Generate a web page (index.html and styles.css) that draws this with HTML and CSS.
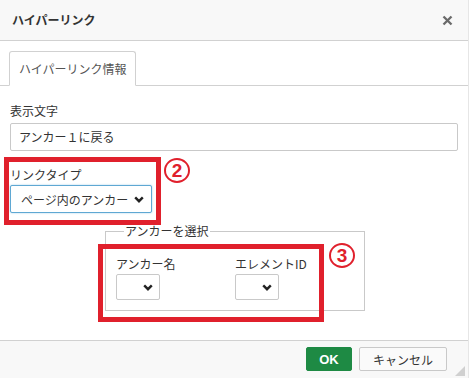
FILE: index.html
```html
<!doctype html>
<html>

<head>
	<link rel="stylesheet" href="styles.css">
</head>

<body>
	<div class="dialog">
		<div class="head">
			<span class="title">ハイパーリンク</span>
			<svg class="close" width="11" height="11" viewBox="0 0 11 11"><path d="M1.5 1.5 L9.5 9.5 M9.5 1.5 L1.5 9.5" stroke="#6a6a6a" stroke-width="2.3"/></svg>
		</div>
		<div class="main">
			<div class="tabs">
				<div class="tab">ハイパーリンク情報</div>
			</div>
			<div class="label first">表示文字</div>
			<div class="input">アンカー１に戻る</div>
			<div class="label second">リンクタイプ</div>
			<div class="select focus">
				<span>ページ内のアンカー</span>
				<svg width="10" height="7" viewBox="0 0 10 7"><path d="M1.2 1.4 L5 5.2 L8.8 1.4" fill="none" stroke="#222" stroke-width="2.4"/></svg>
			</div>
			<fieldset class="anchors">
				<legend>アンカーを選択</legend>
				<div class="cols">
					<div class="col">
						<div class="label">アンカー名</div>
						<div class="select small">
							<svg width="10" height="7" viewBox="0 0 10 7"><path d="M1.2 1.4 L5 5.2 L8.8 1.4" fill="none" stroke="#222" stroke-width="2.4"/></svg>
						</div>
					</div>
					<div class="col">
						<div class="label">エレメントID</div>
						<div class="select small">
							<svg width="10" height="7" viewBox="0 0 10 7"><path d="M1.2 1.4 L5 5.2 L8.8 1.4" fill="none" stroke="#222" stroke-width="2.4"/></svg>
						</div>
					</div>
				</div>
			</fieldset>
		</div>
		<div class="foot">
			<button type="button" class="ok">OK</button>
			<button type="button" class="cancel">キャンセル</button>
		</div>
		<span class="grip"></span>

		<!-- annotations -->
		<div class="mark mark-type"></div>
		<div class="num num-2">2</div>
		<div class="mark mark-anchor"></div>
		<div class="num num-3">3</div>
	</div>
</body>

</html>
```

FILE: styles.css
```css
body {
	margin: 0;
	background: #fff;
	font-family: "Noto Sans CJK JP", "Noto Sans", sans-serif;
	font-size: 12px;
	color: #333;
}

.dialog {
	position: relative;
	width: 469px;
	height: 378px;
	display: flex;
	flex-direction: column;
	box-sizing: border-box;
	border-right: 1px solid #e6e6e6;
	overflow: hidden;
}

.head {
	height: 40px;
	flex: none;
	display: flex;
	justify-content: space-between;
	align-items: center;
	padding: 0 15px 0 12px;
	background: #f8f8f8;
	border-bottom: 1px solid #d1d1d1;
}

.title {
	font-weight: bold;
	color: #333;
	line-height: 16px;
}

.main {
	flex: 1;
	padding: 0 10px;
}

.tabs {
	margin: 10px -10px 0;
	padding-left: 9px;
	border-bottom: 1px solid #d1d1d1;
	display: flex;
}

.tab {
	height: 33px;
	line-height: 33px;
	padding: 0 8px 0 9px;
	margin-bottom: -1px;
	background: #fff;
	border: 1px solid #d1d1d1;
	border-bottom: 1px solid #fff;
	border-radius: 3px 3px 0 0;
	color: #555;
}

.label {
	line-height: 16px;
	color: #333;
	white-space: nowrap;
}

.label.first {
	margin-top: 17px;
}

.label.second {
	margin-top: 16px;
}

.input {
	margin-top: 4px;
	height: 28px;
	line-height: 26px;
	box-sizing: border-box;
	border: 1px solid #c9c9c9;
	border-radius: 2px;
	padding: 0 8px;
}

.select {
	margin-top: 2px;
	height: 28px;
	box-sizing: border-box;
	border: 1px solid #c9c9c9;
	border-radius: 2px;
	display: flex;
	align-items: center;
	justify-content: flex-end;
	padding: 0 7px;
	background: #fff;
	white-space: nowrap;
}

.select.focus {
	width: 142px;
	justify-content: space-between;
	padding: 0 7px 0 10px;
	border: 1px solid #5fa8d3;
	box-shadow: 0 0 2px #9ccbe6;
}

.select.small {
	width: 44px;
	height: 26px;
	margin-top: 2px;
	padding: 0 6px;
}

.anchors {
	margin: 10px 0 0 95px;
	width: 259px;
	box-sizing: border-box;
	padding: 17px 10px 10px;
	border: 1px solid #c9c9c9;
}

.anchors legend {
	padding: 0 1px;
	margin-left: 8px;
	line-height: 16px;
	color: #333;
}

.cols {
	display: flex;
}

.col {
	width: 119px;
}

.foot {
	height: 38px;
	flex: none;
	box-sizing: border-box;
	border-top: 1px solid #d1d1d1;
	background: #f8f8f8;
	display: flex;
	justify-content: flex-end;
	align-items: flex-start;
	gap: 7px;
	padding: 6px 21px 0 0;
}

button {
	font-family: inherit;
	font-size: 12px;
	height: 24px;
	border-radius: 2px;
	box-sizing: border-box;
	cursor: pointer;
	padding: 0;
}

button.ok {
	width: 46px;
	background: #1e8a44;
	border: 1px solid #1e8a44;
	color: #fff;
	font-weight: bold;
	font-size: 13px;
	font-family: "Liberation Sans", Arial, sans-serif;
}

button.cancel {
	width: 88px;
	background: #fafafa;
	border: 1px solid #c9c9c9;
	color: #333;
}

.grip {
	position: absolute;
	right: 3px;
	bottom: 2px;
	width: 0;
	height: 0;
	border-left: 10px solid transparent;
	border-bottom: 10px solid #d0d0d0;
}

.mark {
	position: absolute;
	border: 5px solid #e0202c;
	box-sizing: border-box;
}

.mark-type {
	left: 4px;
	top: 157px;
	width: 157px;
	height: 68px;
}

.mark-anchor {
	left: 98px;
	top: 244px;
	width: 226px;
	height: 78px;
}

.num {
	position: absolute;
	width: 26px;
	height: 25px;
	box-sizing: border-box;
	border: 2px solid #e0202c;
	border-radius: 50%;
	background: #fff;
	color: #e0202c;
	font-family: "Liberation Sans", Arial, sans-serif;
	font-weight: bold;
	font-size: 19px;
	line-height: 21px;
	text-align: center;
}

.num-2 {
	left: 164px;
	top: 158px;
}

.num-3 {
	left: 329px;
	top: 243px;
}
```
